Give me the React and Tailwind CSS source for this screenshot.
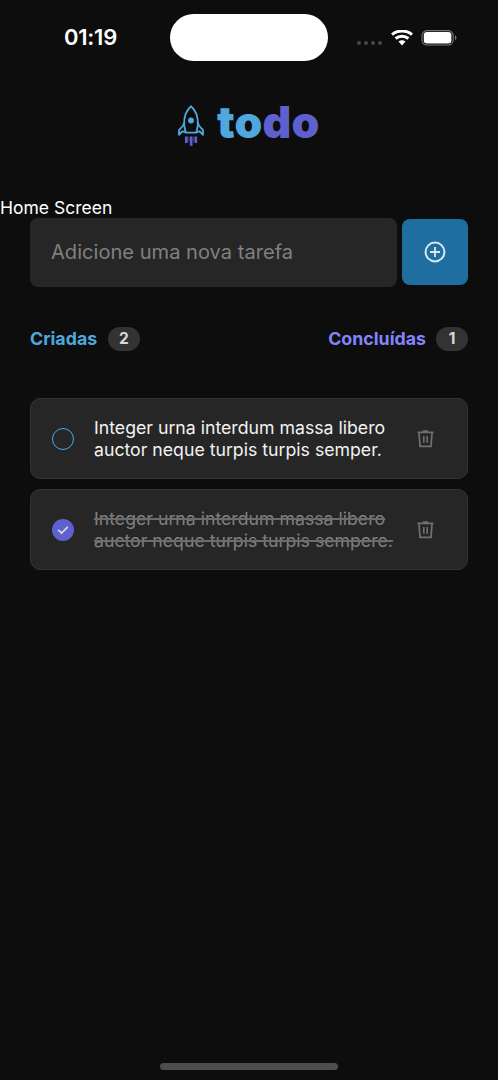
import React from "react";

function StatusBar() {
  return (
    <header className="flex h-[61px] pt-3.5">
      <div className="flex h-[47px] w-[170px] items-center pl-[64px] text-[22px] font-semibold tracking-[-0.25px] text-white">
        01:19
      </div>
      <div className="h-[47px] w-[158px] rounded-full bg-white" />
      <div className="flex h-[47px] flex-1 items-center pl-[29px]">
        <div className="mt-[11px] flex gap-[2.6px]">
          <span className="size-[4.4px] rounded-full bg-[#484848]" />
          <span className="size-[4.4px] rounded-full bg-[#484848]" />
          <span className="size-[4.4px] rounded-full bg-[#484848]" />
          <span className="size-[4.4px] rounded-full bg-[#484848]" />
        </div>
        <svg className="ml-[9px] h-4 w-[22px]" viewBox="0 0 22 16" fill="none" stroke="white" strokeWidth="3">
          <path d="M1 4.6C6.6 -.2 15.4 -.2 21 4.6" />
          <path d="M4.6 8.5C8.2 5.4 13.8 5.4 17.4 8.5" />
          <path d="M7.5 11.5C9.5 9.7 12.5 9.7 14.5 11.5L11 15.4Z" fill="white" stroke="none" />
        </svg>
        <svg className="ml-2 h-4 w-9" viewBox="0 0 36 16" fill="none">
          <rect x="1" y=".6" width="31.2" height="14.4" rx="4.9" stroke="#777" strokeWidth="1.1" />
          <rect x="2.8" y="2" width="27.6" height="11.5" rx="3.2" fill="white" />
          <path d="M34 5Q37 7.7 34 10.4Z" fill="#777" />
        </svg>
      </div>
    </header>
  );
}

function Logo() {
  return (
    <div className="mt-11 flex h-[42px]">
      <svg className="ml-[178px] h-[42px] w-[27px]" viewBox="0 0 27 42" fill="none">
        <g stroke="#4EA8DE" strokeWidth="1.8" strokeLinejoin="round">
          <path d="M7.7 27.6L6.2 20.5C5.7 12.5 7.2 6.3 13 1.3C18.8 6.3 20.3 12.5 19.8 20.5L18.3 27.6Z" />
          <path d="M6 17.5L5.2 20.5L1 25.2V29.8L4.2 26.3L7.2 27.2M20 17.5L20.8 20.5L25 25.2V29.8L21.8 26.3L18.8 27.2" />
        </g>
        <circle cx="13" cy="15.5" r="2.9" fill="#4EA8DE" />
        <path d="M8.3 31.5V38M13.2 31.5V40.7M17.8 31.5V38" stroke="#5E60CE" strokeWidth="2.7" />
        <path d="M10.7 31.5V36.5M15.5 31.5V36.5" stroke="#5E60CE" strokeOpacity=".55" strokeWidth="1.2" />
      </svg>
      <div className="ml-3 text-[44.5px] leading-[34px] font-black tracking-[0.2px] text-[#4EA8DE]">
        to<span className="text-[#5E60CE]">do</span>
      </div>
    </div>
  );
}

function Counter({ label, count, color }) {
  return (
    <div className="flex items-center gap-2.5">
      <span className={"text-[17.8px] leading-6 font-bold " + color}>{label}</span>
      <span className="flex h-6 w-8 items-center justify-center rounded-full bg-[#333333] text-[15.5px] font-bold text-[#D9D9D9]">
        {count}
      </span>
    </div>
  );
}

function TrashIcon() {
  return (
    <svg className="ml-auto h-[19px] w-[17px]" viewBox="0 0 17 19" fill="none" stroke="#707070">
      <path d="M.5 3.3H16.5M5.8 2H11.2" strokeWidth="1.7" />
      <path d="M2 3.5L3 17.4H14L15 3.5" strokeWidth="1.7" />
      <path d="M6.8 7V13.8M10.2 7V13.8" strokeWidth="1.6" />
    </svg>
  );
}

function Task({ first, second, done }) {
  return (
    <li className="flex h-[81px] items-center rounded-[10px] border border-[#333333] bg-[#262626] pr-[33px] pl-[21px]">
      {done ? (
        <svg className="size-[22px]" viewBox="0 0 22 22" fill="none">
          <circle cx="11" cy="11" r="11" fill="#5E60CE" />
          <path d="M6.1 10.8L9.6 14L15.8 7.8" stroke="#D9D9E8" strokeWidth="1.7" />
        </svg>
      ) : (
        <span className="size-[22px] rounded-full border-[1.5px] border-[#4EA8DE]" />
      )}
      <p
        className={
          "ml-5 text-[17.7px] leading-[22px] whitespace-nowrap " +
          (done ? "text-[#808080] line-through decoration-2 decoration-[#6c6c6c]" : "text-[#F2F2F2]")
        }
      >
        {first}
        <br />
        {second}
      </p>
      <TrashIcon />
    </li>
  );
}

export default function App() {
  return (
    <main className="flex h-[1080px] w-[498px] flex-col overflow-hidden bg-[#0D0D0D] font-['Inter','Liberation_Sans',sans-serif]">
      <StatusBar />
      <Logo />
      <p className="mt-[50px] h-[21px] text-[17.5px] leading-[21px] text-white">Home Screen</p>
      <div className="flex items-start gap-[5px] pr-[30px] pl-[30px]">
        <div className="flex h-[69px] w-[367px] items-center rounded-[8px] bg-[#262626] pl-[21px] text-[20.1px] text-[#808080]">
          Adicione uma nova tarefa
        </div>
        <button className="mt-px flex h-[66px] w-[66px] items-center justify-center rounded-[8px] bg-[#1E6F9F]" aria-label="Adicionar">
          <svg className="size-[22px]" viewBox="0 0 22 22" fill="none" stroke="#DCE8EE">
            <circle cx="11" cy="11" r="9.4" strokeWidth="2" />
            <path d="M11 6V16M6 11H16" strokeWidth="1.8" />
          </svg>
        </button>
      </div>
      <div className="mt-10 flex h-6 items-center justify-between pr-[30px] pl-[30px]">
        <Counter label="Criadas" count={2} color="w-[68px] text-[#4EA8DE]" />
        <Counter label="Concluídas" count={1} color="text-[#8284FA]" />
      </div>
      <ul className="mt-[47px] flex flex-col gap-2.5 px-[30px]">
        <Task first="Integer urna interdum massa libero" second="auctor neque turpis turpis semper." />
        <Task first="Integer urna interdum massa libero" second="auctor neque turpis turpis sempere." done />
      </ul>
      <div className="mt-auto mb-[10px] ml-[160px] h-[7px] w-[178px] rounded-full bg-[#4D4D4D]" />
    </main>
  );
}
